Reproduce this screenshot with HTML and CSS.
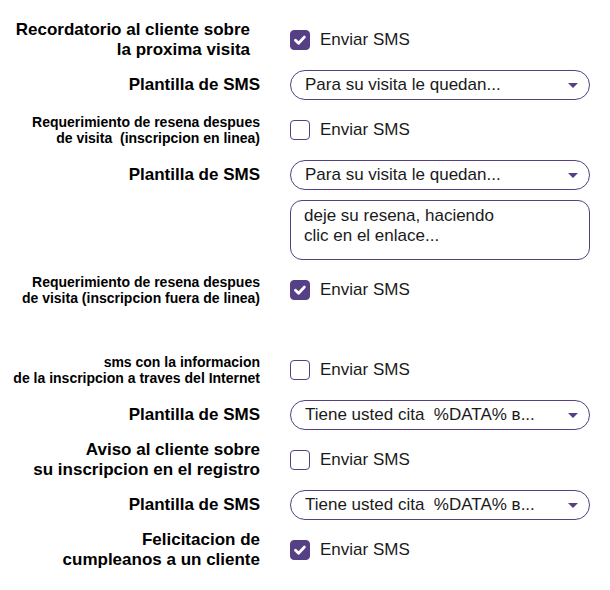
FILE: index.html
```html
<!DOCTYPE html>
<html lang="es">
<head>
<meta charset="utf-8">
<link rel="stylesheet" href="styles.css">
</head>
<body>
<div class="form">
  <div class="row">
    <div class="label big indent">Recordatorio al cliente sobre<br>la proxima visita</div>
    <div class="ctrl"><span class="check on"><svg viewBox="0 0 20 20"><path d="M5 10.3 L8.4 13.6 L14.8 6.8" /></svg></span><span class="ctext">Enviar SMS</span></div>
  </div>
  <div class="row">
    <div class="label big">Plantilla de SMS</div>
    <div class="ctrl"><div class="select"><span>Para su visita le quedan...</span><span class="arrow"></span></div></div>
  </div>
  <div class="row">
    <div class="label small">Requerimiento de resena despues<br>de visita&nbsp; (inscripcion en linea)</div>
    <div class="ctrl"><span class="check"></span><span class="ctext">Enviar SMS</span></div>
  </div>
  <div class="row">
    <div class="label big">Plantilla de SMS</div>
    <div class="ctrl"><div class="select"><span>Para su visita le quedan...</span><span class="arrow"></span></div></div>
  </div>
  <div class="row tarow">
    <div class="label"></div>
    <div class="ctrl"><div class="textarea">deje su resena, haciendo<br>clic en el enlace...</div></div>
  </div>
  <div class="row">
    <div class="label small">Requerimiento de resena despues<br>de visita (inscripcion fuera de linea)</div>
    <div class="ctrl"><span class="check on"><svg viewBox="0 0 20 20"><path d="M5 10.3 L8.4 13.6 L14.8 6.8" /></svg></span><span class="ctext">Enviar SMS</span></div>
  </div>
  <div class="row spaced">
    <div class="label small">sms con la informacion<br>de la inscripcion a traves del Internet</div>
    <div class="ctrl"><span class="check"></span><span class="ctext">Enviar SMS</span></div>
  </div>
  <div class="row">
    <div class="label big">Plantilla de SMS</div>
    <div class="ctrl"><div class="select"><span>Tiene usted cita&nbsp; %DATA% в...</span><span class="arrow"></span></div></div>
  </div>
  <div class="row">
    <div class="label big">Aviso al cliente sobre<br>su inscripcion en el registro</div>
    <div class="ctrl"><span class="check"></span><span class="ctext">Enviar SMS</span></div>
  </div>
  <div class="row">
    <div class="label big">Plantilla de SMS</div>
    <div class="ctrl"><div class="select"><span>Tiene usted cita&nbsp; %DATA% в...</span><span class="arrow"></span></div></div>
  </div>
  <div class="row">
    <div class="label big">Felicitacion de<br>cumpleanos a un cliente</div>
    <div class="ctrl"><span class="check on"><svg viewBox="0 0 20 20"><path d="M5 10.3 L8.4 13.6 L14.8 6.8" /></svg></span><span class="ctext">Enviar SMS</span></div>
  </div>
</div>
</body>
</html>
```
FILE: styles.css
```css
* { box-sizing: border-box; }
html, body { margin: 0; padding: 0; background: #fff; }
body {
  font-family: "Liberation Sans", Arial, sans-serif;
  color: #111;
}
.form {
  padding-top: 20px;
  display: flex;
  flex-direction: column;
  gap: 5px;
}
.row {
  display: flex;
  align-items: center;
  min-height: 40px;
}
.row.tarow { min-height: 60px; margin-bottom: 5px; align-items: flex-start; }
.row.spaced { margin-top: 35px; }
.label {
  width: 260px;
  text-align: right;
  font-weight: bold;
  flex: none;
  color: #000;
}
.label.indent { padding-right: 10px; }
.label.big { font-size: 17px; line-height: 20px; }
.label.small { font-size: 14px; line-height: 16px; }
.ctrl {
  margin-left: 30px;
  width: 300px;
  display: flex;
  align-items: center;
}
.check {
  width: 20px;
  height: 20px;
  border: 1.5px solid #553f85;
  border-radius: 4px;
  background: #fff;
  flex: none;
  display: flex;
}
.check.on { background: #553f85; }
.check svg { width: 100%; height: 100%; }
.check svg path {
  fill: none;
  stroke: #fff;
  stroke-width: 3.2;
  stroke-linecap: round;
  stroke-linejoin: round;
}
.ctext {
  margin-left: 10px;
  font-size: 17px;
  color: #1a1a1a;
}
.select {
  width: 300px;
  height: 30px;
  border: 1px solid #553f85;
  border-radius: 15px;
  display: flex;
  align-items: center;
  justify-content: space-between;
  padding: 0 11px 0 14px;
  font-size: 17px;
  color: #1a1a1a;
}
.arrow {
  width: 0;
  height: 0;
  border-left: 5px solid transparent;
  border-right: 5px solid transparent;
  border-top: 5px solid #553f85;
}
.textarea {
  width: 300px;
  height: 60px;
  border: 1px solid #553f85;
  border-radius: 12px;
  padding: 5px 13px;
  font-size: 17px;
  line-height: 20px;
  color: #1a1a1a;
}
```
